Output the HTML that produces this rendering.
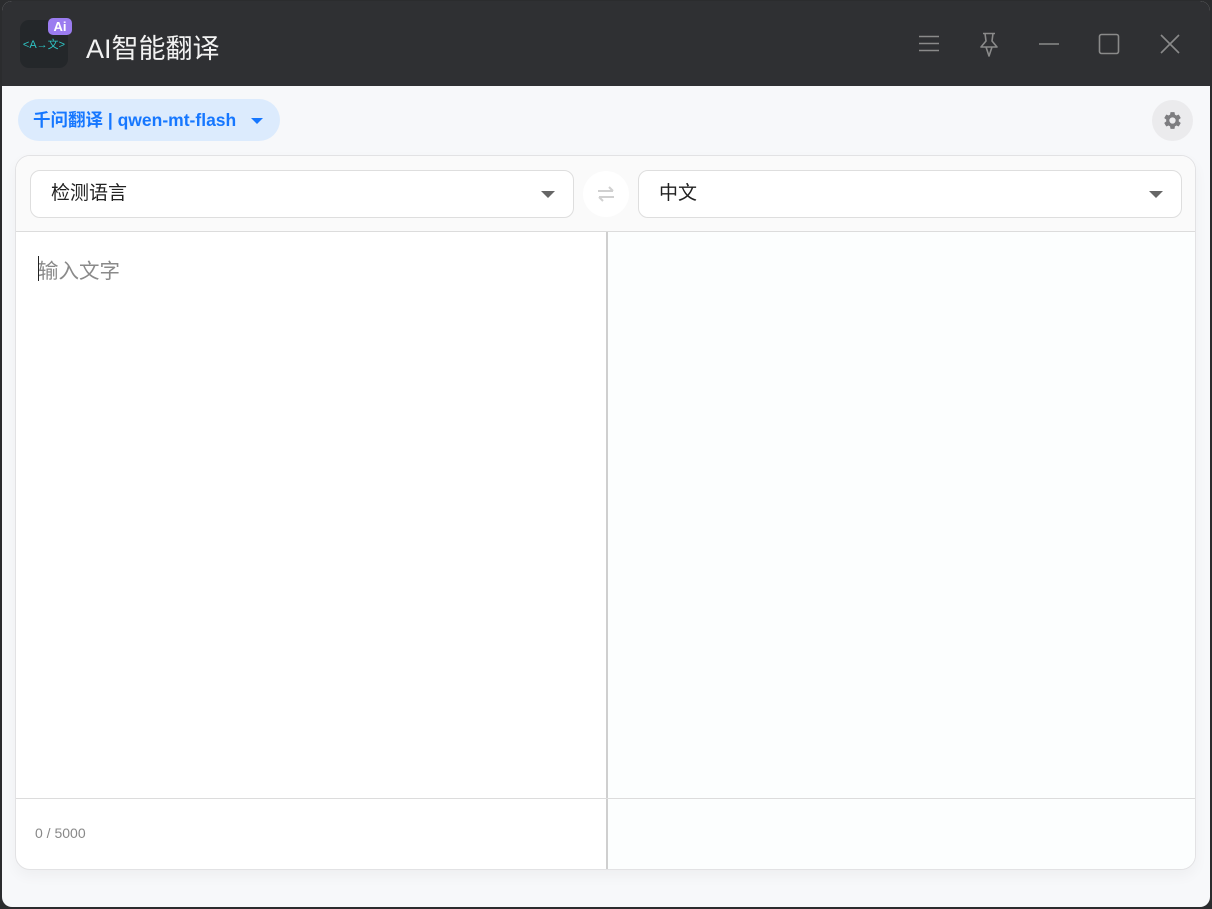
<!DOCTYPE html>
<html><head><meta charset="utf-8"><style>
*{box-sizing:border-box;margin:0;padding:0}
html,body{width:1212px;height:909px;overflow:hidden;background:#2b2c2e}
body{font-family:"Liberation Sans","Noto Sans CJK SC",sans-serif}
.win{position:absolute;left:2px;top:1px;width:1208px;height:906px;border-radius:10px;overflow:hidden;background:#f7f8fa}
.title{position:absolute;left:0;top:0;width:1208px;height:85px;background:#2f3033}
.logo{position:absolute;left:18px;top:19px;width:48px;height:48px;border-radius:9px;background:#24272a}
.logo .t{position:absolute;left:0;top:16px;width:48px;text-align:center;color:#2ec4c4;font-size:11px;letter-spacing:0}
.ai{position:absolute;left:46px;top:17px;width:24px;height:17px;border-radius:5px;background:#9b7cf0;color:#fff;font-size:13px;font-weight:bold;text-align:center;line-height:17px}
.tt{position:absolute;left:84px;top:26px;color:#f2f2f2;font-size:27px}
.ic{position:absolute;top:32px}
.chip{position:absolute;left:16px;top:98px;width:262px;height:42px;border-radius:21px;background:#dcebfd;color:#1677ff;font-weight:bold;font-size:17.5px;line-height:42px;padding-left:15px}
.chip:after{content:"";position:absolute;left:233px;top:19px;border:6px solid transparent;border-top:6px solid #1677ff;border-bottom:0}
.gear{position:absolute;left:1150px;top:99px;width:41px;height:41px;border-radius:50%;background:#ebebed}
.card{position:absolute;left:13px;top:154px;width:1181px;height:715px;border:1px solid #e2e2e4;border-radius:15px;background:#fff;overflow:hidden;box-shadow:0 6px 14px rgba(0,0,0,.04)}
.top{position:absolute;left:0;top:0;width:100%;height:76px;background:#fafafa;border-bottom:1px solid #dcdcdc}
.sel{position:absolute;top:14px;width:544px;height:48px;border:1px solid #dedede;border-radius:10px;background:#fff;font-size:19px;color:#222;line-height:46px;padding-left:20px}
.sel:after{content:"";position:absolute;right:18px;top:20px;border:7px solid transparent;border-top:7px solid #666;border-bottom:0}
.swap{position:absolute;left:567px;top:15px;width:46px;height:46px;border-radius:50%;background:#fff}
.vl{position:absolute;left:590px;top:76px;width:2px;height:640px;background:#cfcfcf}
.right{position:absolute;left:592px;top:76px;width:600px;height:640px;background:#fcfefe}
.fl{position:absolute;left:0;top:642px;width:100%;height:1px;background:#dcdcdc}
.ph{position:absolute;left:22px;top:98px;font-size:20.5px;color:#8a8a8a}
.cur{position:absolute;left:22px;top:100px;width:1px;height:25px;background:#222}
.cnt{position:absolute;left:19px;top:669px;font-size:14px;color:#888}
</style></head><body>
<div class="win">
<div class="title">
 <div class="logo"><div class="t">&lt;A→文&gt;</div></div>
 <div class="ai">Ai</div>
 <div class="tt">AI智能翻译</div>
 <svg class="ic" style="left:916px" width="22" height="20" viewBox="0 0 22 20"><path d="M1 3.5H21M1 10.5H21M1 17.5H21" stroke="#8a8a8a" stroke-width="1.6" fill="none"/></svg>
 <svg class="ic" style="left:974px;top:30px" width="26" height="28" viewBox="0 0 26 28"><path d="M7 2.5H19M9 2.5L10 10L5 16H21L16 10L17 2.5M10 16L13 25L16 16" stroke="#8a8a8a" stroke-width="1.6" fill="none" stroke-linejoin="round"/></svg>
 <svg class="ic" style="left:1036px" width="22" height="20" viewBox="0 0 22 20"><path d="M1 11H21" stroke="#8a8a8a" stroke-width="1.6"/></svg>
 <svg class="ic" style="left:1096px" width="22" height="22" viewBox="0 0 22 22"><rect x="1.5" y="1.5" width="19" height="19" rx="2" stroke="#8a8a8a" stroke-width="1.6" fill="none"/></svg>
 <svg class="ic" style="left:1157px" width="22" height="22" viewBox="0 0 22 22"><path d="M2 2L20 20M20 2L2 20" stroke="#8a8a8a" stroke-width="1.6"/></svg>
</div>
<div class="chip">千问翻译 | qwen-mt-flash</div>
<div class="gear"><svg style="position:absolute;left:10px;top:10px" width="21" height="21" viewBox="0 0 24 24"><path fill="#7d7d80" d="M19.14 12.94c.04-.3.06-.61.06-.94s-.02-.64-.07-.94l2.030-1.58a.5.5 0 0 0 .12-.61l-1.92-3.32a.5.5 0 0 0-.59-.22l-2.39.96c-.5-.38-1.03-.7-1.62-.94l-.36-2.54a.48.48 0 0 0-.48-.41h-3.84c-.24 0-.43.17-.47.41l-.36 2.540c-.59.24-1.13.57-1.620.94l-2.39-.96a.5.5 0 0 0-.59.22L2.74 8.87c-.12.21-.08.47.12.61l2.03 1.58c-.05.3-.09.63-.09.94s.02.64.07.94l-2.03 1.58a.5.5 0 0 0-.12.61l1.92 3.32c.12.22.37.29.59.22l2.39-.96c.5.38 1.03.7 1.62.94l.36 2.54c.05.24.24.41.48.41h3.84c.24 0 .44-.17.47-.41l.36-2.54c.59-.24 1.13-.56 1.62-.94l2.39.96c.22.08.47 0 .59-.22l1.92-3.32c.12-.22.07-.47-.12-.61l-2.01-1.58zM12 15.6A3.6 3.6 0 1 1 12 8.4a3.6 3.6 0 0 1 0 7.2z"/></svg></div>
<div class="card">
 <div class="right"></div>
 <div class="top">
  <div class="sel" style="left:14px">检测语言</div>
  <div class="swap"><svg style="position:absolute;left:13px;top:14px" width="20" height="18" viewBox="0 0 20 18"><path d="M2 6H17M13 2L17 6M18 12H3M7 16L3 12" stroke="#d0d0d0" stroke-width="2" fill="none"/></svg></div>
  <div class="sel" style="left:622px">中文</div>
 </div>
 <div class="vl"></div>
 <div class="fl"></div>
 <div class="ph">输入文字</div>
 <div class="cur"></div>
 <div class="cnt">0 / 5000</div>
</div>
</div>
</body></html>
